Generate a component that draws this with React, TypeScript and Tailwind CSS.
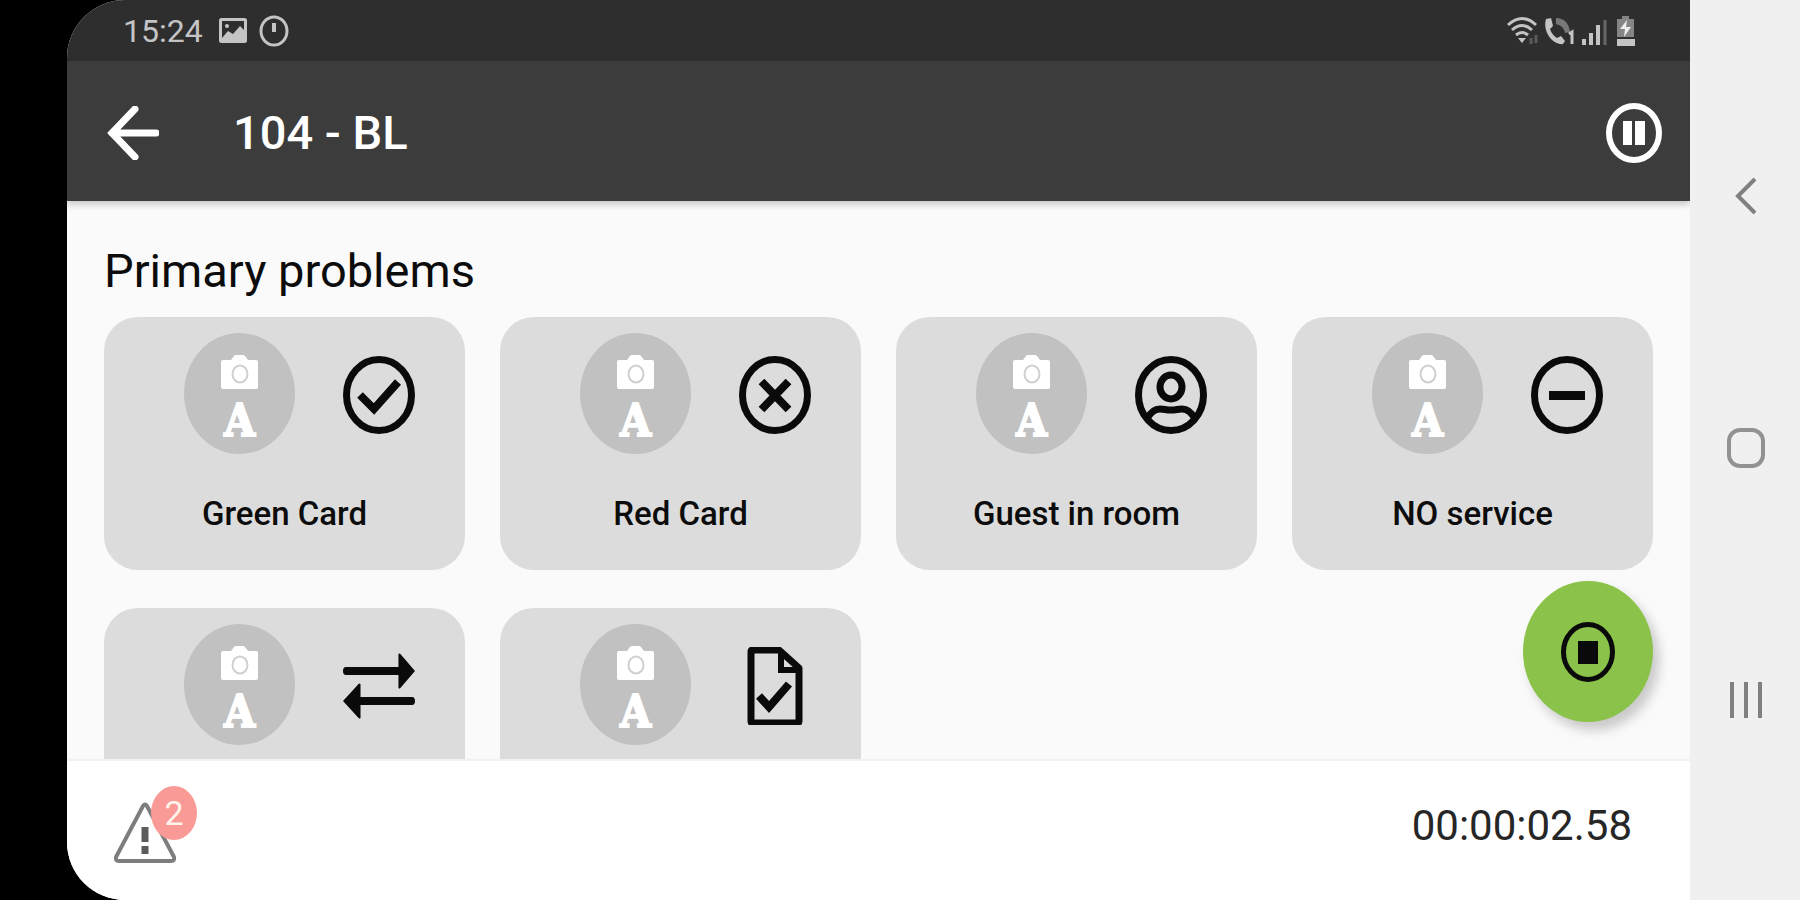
// src/App.tsx
import type { ReactNode } from 'react';

const CheckCircle = () => (
  <svg viewBox="0 0 72 78" preserveAspectRatio="none" className="w-18 h-[78px]" fill="none" stroke="#0a0a0a">
    <ellipse cx="36" cy="39" rx="32.5" ry="35.5" strokeWidth="7" />
    <path d="M17 39l14 14 24-27" strokeWidth="8" />
  </svg>
);

const CloseCircle = () => (
  <svg viewBox="0 0 72 78" preserveAspectRatio="none" className="w-18 h-[78px]" fill="none" stroke="#0a0a0a">
    <ellipse cx="36" cy="39" rx="32.5" ry="35.5" strokeWidth="7" />
    <path d="M22.500 25.500l27 28M49.500 25.500l-27 28" strokeWidth="8" />
  </svg>
);

const GuestCircle = () => (
  <svg viewBox="0 0 72 78" preserveAspectRatio="none" className="w-18 h-[78px]" fill="none" stroke="#0a0a0a">
    <ellipse cx="36" cy="39" rx="32.5" ry="35.5" strokeWidth="7" />
    <ellipse cx="36" cy="31" rx="11" ry="12" strokeWidth="7" />
    <path d="M12 63c4-8 8-10 13-10 4 0 6 1 11 1s7-1 11-1c5 0 9 2 13 10" strokeWidth="7" />
  </svg>
);

const MinusCircle = () => (
  <svg viewBox="0 0 72 78" preserveAspectRatio="none" className="w-18 h-[78px]" fill="none" stroke="#0a0a0a">
    <ellipse cx="36" cy="39" rx="32.5" ry="35.5" strokeWidth="7" />
    <path d="M18 39.500h36" strokeWidth="9" />
  </svg>
);

const SwapArrows = () => (
  <svg viewBox="0 0 74 78" preserveAspectRatio="none" className="w-18 h-[78px]" fill="#0a0a0a">
    <path d="M0 24q0-4 3-4h54V7q1-1 2 0l15 17-15 17q-1 1-2 0V28H3q-3 0-3-4z" />
    <path d="M74 54q0-4-3-4H18V37q-1-1-2 0L0 54l16 17q1 1 2 0V58h53q3 0 3-4z" />
  </svg>
);

const FileCheck = () => (
  <svg viewBox="0 0 72 78" preserveAspectRatio="none" className="w-18 h-[78px]" fill="none" stroke="#0a0a0a">
    <path d="M14 3h26l20 18v53q0 2-2 2H14q-2 0-2-2V5q0-2 2-2z" strokeWidth="7" strokeLinejoin="round" />
    <path d="M42 5v18h17" strokeWidth="6" />
    <path d="M20 49l10 11 20-23" strokeWidth="8" />
  </svg>
);

const problems: { id: number; label?: string; icon: ReactNode }[] = [
  { id: 1, label: 'Green Card', icon: <CheckCircle /> },
  { id: 2, label: 'Red Card', icon: <CloseCircle /> },
  { id: 3, label: 'Guest in room', icon: <GuestCircle /> },
  { id: 4, label: 'NO service', icon: <MinusCircle /> },
  { id: 5, icon: <SwapArrows /> },
  { id: 6, icon: <FileCheck /> },
];

function PhotoBadge() {
  return (
    <span className="w-[111px] h-[121px] rounded-[50%] bg-[#c1c1c1] flex flex-col items-center pt-[22px]">
      <svg viewBox="0 0 37 34" className="w-[37px] h-[34px]">
        <path
          d="M2 5h8l3-4q1-1 2-1h7q1 0 2 1l3 4h8q2 0 2 2v25q0 2-2 2H2q-2 0-2-2V7q0-2 2-2z"
          fill="#fff"
        />
        <ellipse cx="19" cy="19" rx="7.5" ry="8.500" fill="none" stroke="#d0d0d0" strokeWidth="2" />
      </svg>
      <span className="mt-2 font-['DejaVu_Serif_Condensed','DejaVu_Serif',serif] font-bold text-[44px] leading-[48px] text-white [-webkit-text-stroke:2px_white]">
        A
      </span>
    </span>
  );
}

function ProblemCard({ label, icon }: { label?: string; icon: ReactNode }) {
  return (
    <button type="button" className="h-[253px] rounded-[34px] bg-[#dcdcdc] flex flex-col items-center pt-4">
      <span className="flex items-center gap-12 pl-[30px]">
        <PhotoBadge />
        <span className="pt-0.5">{icon}</span>
      </span>
      {label && (
        <span className="mt-10 text-[33px] leading-[40px] font-medium text-[#0c0c0c]">{label}</span>
      )}
    </button>
  );
}

function StatusBar() {
  return (
    <div className="h-[61px] shrink-0 bg-[#2e2e2e] flex items-center justify-between pl-14 pr-[54px] text-[#c4c4c4]">
      <div className="flex items-center">
        <span className="text-[32px] leading-[40px]">15:24</span>
        <svg viewBox="0 0 28 25" className="ml-4 w-7 h-[25px]">
          <rect x="1.500" y="1.500" width="25" height="22" rx="1" fill="none" stroke="currentColor" strokeWidth="3" />
          <path d="M3 20l6-7 5 3 7-8 5 5v10H3z" fill="currentColor" />
          <circle cx="8" cy="8" r="2" fill="currentColor" />
        </svg>
        <svg viewBox="0 0 30 32" className="ml-3 w-[30px] h-8" fill="none" stroke="currentColor" strokeWidth="3">
          <ellipse cx="15" cy="16" rx="13" ry="14" />
          <path d="M15 8v9" strokeWidth="4" />
        </svg>
      </div>
      <div className="flex items-center gap-1">
        <svg viewBox="0 0 33 30" className="w-[33px] h-[30px]" fill="none" stroke="currentColor" strokeWidth="3">
          <path d="M1 9q14-13 28 0M5 14q10-9 20 0M9 19q6-5 12 0" />
          <path d="M11 22h8l-4 5z" fill="currentColor" stroke="none" />
          <path d="M24 28v-6M29 19v8" stroke="#5a5a5a" />
        </svg>
        <svg viewBox="0 0 30 30" className="w-[30px] h-[30px]">
          <path
            d="M2 3l5-1 2 8-3 3q2 6 7 9l4-2 4 5-2 3q-6 1-12-5Q-1 14 2 3z"
            fill="currentColor"
          />
          <path d="M12 2q12 0 14 14l-5 1q-1-7-9-9z" fill="#777" />
          <path d="M25 18l3-2v12" fill="none" stroke="currentColor" strokeWidth="3" />
        </svg>
        <svg viewBox="0 0 26 30" className="ml-1 w-[26px] h-[30px]" fill="none" stroke="currentColor" strokeWidth="4">
          <path d="M2 29v-6M9 29V17M16 29V9" />
          <path d="M23 29V4" stroke="#666" strokeWidth="3" />
        </svg>
        <svg viewBox="0 0 20 30" className="ml-1 w-5 h-[30px]">
          <path d="M6 0h7v3h5v18H1V3h5z" fill="#858585" />
          <path d="M1 23h18v7H1z" fill="currentColor" />
          <path d="M11 4l-7 9h5l-1 8 7-10h-5z" fill="#eee" />
        </svg>
      </div>
    </div>
  );
}

function TopBar() {
  return (
    <header className="relative z-10 h-[140px] shrink-0 bg-[#3c3c3c] flex items-center pt-1 pl-10 pr-7 text-white shadow-[0_4px_6px_rgba(0,0,0,0.18)]">
      <button type="button" aria-label="Back">
        <svg viewBox="0 0 52 54" className="w-[52px] h-[54px]" fill="none" stroke="currentColor" strokeWidth="7">
          <path d="M49 27H5M28 3L5 27l23 24" strokeLinecap="round" />
        </svg>
      </button>
      <h1 className="ml-[74px] flex-1 text-[47px] leading-[56px] font-medium">104 - BL</h1>
      <button type="button" aria-label="Pause">
        <svg viewBox="0 0 56 60" className="w-14 h-[60px]">
          <ellipse cx="28" cy="30" rx="25" ry="27" fill="none" stroke="currentColor" strokeWidth="6" />
          <path d="M17 18h9v24h-9zM29 18h10v24h-10z" fill="currentColor" />
        </svg>
      </button>
    </header>
  );
}

function BottomBar() {
  return (
    <footer className="h-[141px] shrink-0 bg-white border-t-2 border-[#f1f1f1] flex items-center justify-between pl-[46px] pr-[58px] pb-2.5">
      <button type="button" aria-label="Warnings" className="relative mt-3.5">
        <svg viewBox="0 0 64 62" className="w-16 h-[62px]" fill="none" stroke="#7d7d7d">
          <path d="M30 4q2-3 4 0l27 51q1 4-3 4H6q-4 0-3-4z" strokeWidth="4" />
          <path d="M32 25v15M32 44v8" stroke="#5c5c5c" strokeWidth="7" />
        </svg>
        <span className="absolute left-[38px] -top-4 w-[46px] h-[54px] rounded-[50%] bg-[#fa9a97] text-[34px] leading-[54px] text-[#fff4ec] text-center">
          2
        </span>
      </button>
      <time className="text-[42px] leading-[48px] text-[#262626]">00:00:02.58</time>
    </footer>
  );
}

function SystemNav() {
  return (
    <nav className="w-[110px] shrink-0 bg-[#f0f0f0] flex flex-col items-center justify-center gap-[212px] pl-0.5 pb-1 text-[#808080]">
      <button type="button" aria-label="System back">
        <svg viewBox="0 0 24 40" className="w-6 h-10" fill="none" stroke="currentColor" strokeWidth="4">
          <path d="M21 3L4 20l17 17" />
        </svg>
      </button>
      <button type="button" aria-label="Home" className="w-[38px] h-10 rounded-[13px] border-4 border-[#929292]" />
      <button type="button" aria-label="Recent apps" className="h-10 flex items-center gap-[10px]">
        <span className="w-1 h-9 bg-current" />
        <span className="w-1 h-9 bg-current" />
        <span className="w-1 h-9 bg-current" />
      </button>
    </nav>
  );
}

export default function App() {
  return (
    <div className="h-screen bg-black pl-[67px] flex font-[Roboto,'Liberation_Sans',sans-serif]">
      <div className="flex-1 min-w-0 flex flex-col rounded-l-[58px] overflow-hidden bg-[#fafafa]">
        <StatusBar />
        <TopBar />
        <div className="relative flex-1 min-h-0">
          <main className="h-full overflow-hidden px-[37px] pt-10">
            <h2 className="text-[47px] leading-[60px] text-[#0c0c0c]">Primary problems</h2>
            <div className="mt-4 grid grid-cols-4 gap-x-[35px] gap-y-[38px]">
              {problems.map((problem) => (
                <ProblemCard key={problem.id} label={problem.label} icon={problem.icon} />
              ))}
            </div>
          </main>
          <button
            type="button"
            aria-label="Stop"
            className="absolute right-[37px] bottom-[37px] w-[130px] h-[141px] rounded-[50%] bg-[#8bc34a] flex items-center justify-center shadow-[6px_8px_12px_rgba(0,0,0,0.2)]"
          >
            <svg viewBox="0 0 54 60" className="w-[54px] h-[60px]">
              <ellipse cx="27" cy="30" rx="24.500" ry="27.500" fill="none" stroke="#0a0a0a" strokeWidth="5" />
              <path d="M17 19h20v23H17z" fill="#0a0a0a" />
            </svg>
          </button>
        </div>
        <BottomBar />
      </div>
      <SystemNav />
    </div>
  );
}
